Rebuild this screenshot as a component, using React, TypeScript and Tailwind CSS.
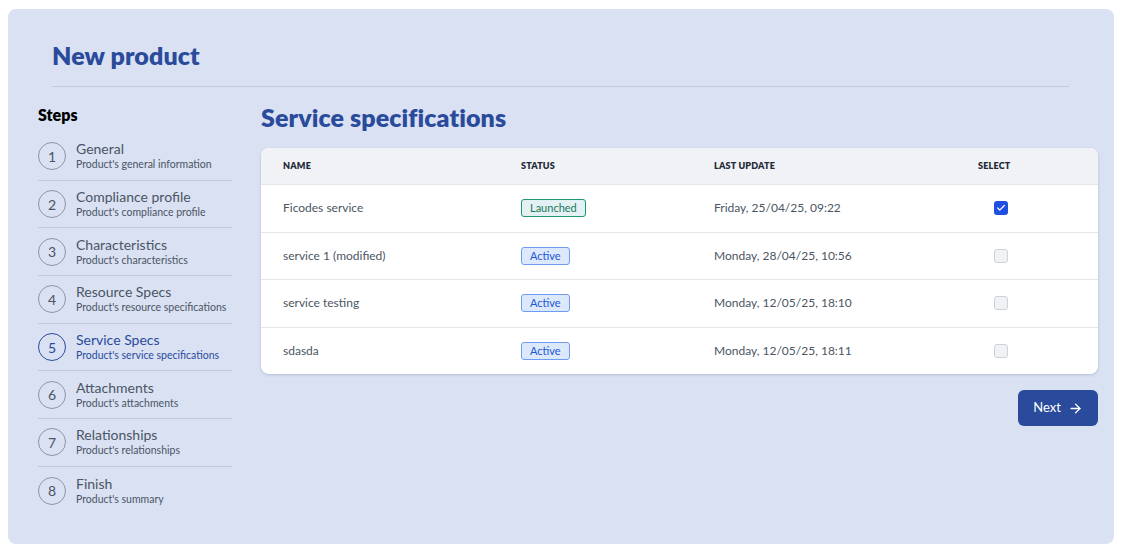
import { ArrowRight, Check } from "lucide-react";

const steps = [
  { title: "General", sub: "Product's general information" },
  { title: "Compliance profile", sub: "Product's compliance profile" },
  { title: "Characteristics", sub: "Product's characteristics" },
  { title: "Resource Specs", sub: "Product's resource specifications" },
  { title: "Service Specs", sub: "Product's service specifications" },
  { title: "Attachments", sub: "Product's attachments" },
  { title: "Relationships", sub: "Product's relationships" },
  { title: "Finish", sub: "Product's summary" },
];

const rows = [
  { name: "Ficodes service", status: "Launched", date: "Friday, 25/04/25, 09:22", checked: true },
  { name: "service 1 (modified)", status: "Active", date: "Monday, 28/04/25, 10:56", checked: false },
  { name: "service testing", status: "Active", date: "Monday, 12/05/25, 18:10", checked: false },
  { name: "sdasda", status: "Active", date: "Monday, 12/05/25, 18:11", checked: false },
];

function StatusBadge({ status }: { status: string }) {
  if (status === "Launched") {
    return <span className="inline-flex h-[18px] items-center rounded-[3px] border border-[#1f9a6f] bg-[#e3f0f4] px-[8px] text-[11px] text-[#187a58]">Launched</span>;
  }
  return <span className="inline-flex h-[18px] items-center rounded-[3px] border border-[#6f9cf0] bg-[#dce8fc] px-[8px] text-[11px] text-[#2356d9]">Active</span>;
}

export default function App() {
  return (
    <div className="bg-white pl-2 pr-[10px] pt-[9px] pb-[9px] font-['Lato',sans-serif]">
      <div className="h-[535px] rounded-lg bg-[#d9e1f3]">
        <div className="pl-[44px] pr-[45px] pt-[30px]">
          <h1 className="text-[25px] leading-8 font-extrabold tracking-[0.1px] text-[#2a4b9b]">New product</h1>
          <div className="mt-[15px] h-px bg-[#c4cad6]" />
        </div>

        <div className="flex pl-[30px] pr-[16px] pt-[16px]">
          <aside className="w-[194px] shrink-0">
            <h2 className="text-[16px] leading-6 font-extrabold text-black">Steps</h2>
            <ul className="mt-[6px]">
              {steps.map((s, i) => {
                const active = i === 4;
                return (
                  <li key={s.title} className={`flex h-[47.7px] items-center gap-[10px] ${i < steps.length - 1 ? "border-b border-[#c4cad6]" : ""}`}>
                    <span className={`grid size-[28px] shrink-0 place-items-center rounded-full border text-[14px] ${active ? "border-[#2a4b9b] text-[#2a4b9b]" : "border-[#8c94a5] text-[#4b5563]"}`}>{i + 1}</span>
                    <span className="min-w-0">
                      <span className={`block text-[14px] leading-4 ${active ? "text-[#2a4b9b]" : "text-[#4b5563]"}`}>{s.title}</span>
                      <span className={`mt-px block text-[10.5px] leading-[13px] ${active ? "text-[#2a4b9b]" : "text-[#4b5563]"}`}>{s.sub}</span>
                    </span>
                  </li>
                );
              })}
            </ul>
          </aside>

          <main className="ml-[29px] min-w-0 flex-1">
            <h2 className="-mt-[2px] text-[25px] leading-8 font-extrabold tracking-[0.1px] text-[#2a4b9b]">Service specifications</h2>
            <div className="mt-[15px] overflow-hidden rounded-lg bg-white shadow-[0_1px_3px_rgba(30,40,80,0.18)]">
              <div className="grid h-[36px] grid-cols-[260px_193px_264px_1fr] items-center bg-[#f0f2f5] text-[9px] font-extrabold tracking-[0.2px] text-[#1f2937] uppercase">
                <span className="pl-[22px]">Name</span>
                <span>Status</span>
                <span>Last update</span>
                <span>Select</span>
              </div>
              {rows.map((r) => (
                <div key={r.name} className="grid h-[47.5px] grid-cols-[260px_193px_264px_1fr] items-center border-t border-[#e2e5ea] text-[12px] text-[#4b5563]">
                  <span className="pl-[22px]">{r.name}</span>
                  <span><StatusBadge status={r.status} /></span>
                  <span>{r.date}</span>
                  <span className="flex w-[46px] justify-center">
                    {r.checked ? (
                      <span className="grid size-[14px] place-items-center rounded-[3px] bg-[#1d4fe0]"><Check className="size-[10px] text-white" strokeWidth={3} /></span>
                    ) : (
                      <span className="size-[14px] rounded-[3px] border border-[#cdd1d8] bg-[#f1f2f5]" />
                    )}
                  </span>
                </div>
              ))}
            </div>
            <div className="mt-[16px] flex justify-end">
              <button className="flex h-[36px] w-[80px] items-center justify-center gap-[7px] rounded-md bg-[#2a4b9b] text-[13px] text-white">
                Next <ArrowRight className="size-[15px]" strokeWidth={2.25} />
              </button>
            </div>
          </main>
        </div>
      </div>
    </div>
  );
}
